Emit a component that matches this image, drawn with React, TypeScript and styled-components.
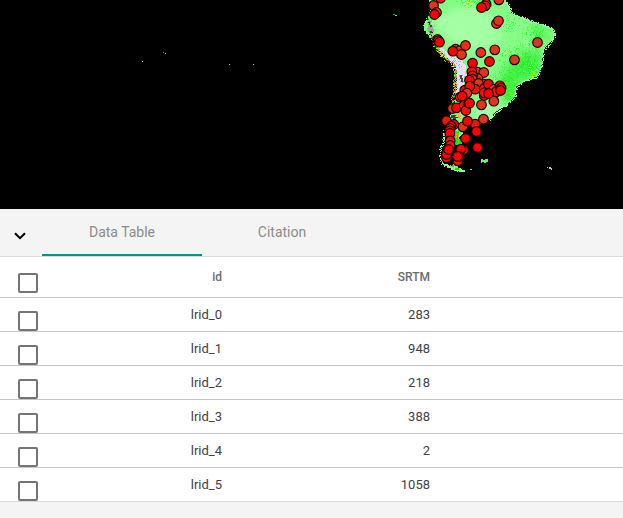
import React from "react";
import styled, { createGlobalStyle } from "styled-components";

const GlobalStyle = createGlobalStyle`
  * { box-sizing: border-box; }
  body { margin: 0; background: #f4f4f4; font-family: Roboto, "Liberation Sans", sans-serif; overflow: hidden; }
`;

const Page = styled.main`
  display: flex;
  flex-direction: column;
  width: 623px;
  height: 518px;
  overflow: hidden;
  background: #f4f4f4;
`;

const MapView = styled.svg`
  display: block;
  flex: none;
  width: 623px;
  height: 209px;
  background: #000;
`;

const TabBar = styled.nav`
  display: flex;
  flex: none;
  height: 48px;
  border-bottom: 1px solid #dcdcdc;
`;

const CollapseButton = styled.button`
  display: flex;
  align-items: center;
  justify-content: center;
  width: 42px;
  height: 47px;
  padding: 7px 2px 0 0;
  border: 0;
  background: none;
`;

const Tab = styled.button<{ $active?: boolean }>`
  width: 160px;
  height: 47px;
  padding: 2px 0 0;
  border: 0;
  border-bottom: 2px solid ${(p) => (p.$active ? "#009688" : "transparent")};
  background: none;
  color: #8b8b8b;
  font: 400 14px/43px Roboto, sans-serif;
`;

const Row = styled.div<{ $header?: boolean }>`
  display: grid;
  grid-template-columns: 56px 166px 208px 1fr;
  flex: none;
  height: ${(p) => (p.$header ? 41 : 34)}px;
  border-bottom: 1px solid #c4c4c4;
  background: #fff;
  color: ${(p) => (p.$header ? "#6c6c6c" : "#424242")};
  font-size: ${(p) => (p.$header ? 12 : 13)}px;
  font-weight: ${(p) => (p.$header ? 500 : 400)};
  line-height: ${(p) => (p.$header ? 40 : 33)}px;

  &:last-child { border-bottom-color: #d8d8d8; }
`;

const CheckCell = styled.div<{ $header?: boolean }>`
  padding: ${(p) => (p.$header ? 16 : 13)}px 0 0 18px;
`;

const Checkbox = styled.div`
  width: 20px;
  height: 20px;
  border: 2px solid #757575;
  border-radius: 2px;
`;

const Cell = styled.div`
  text-align: right;
`;

/* Map geometry is expressed in thirds of a pixel, origin at x = 415. */
const LAND =
  "M42 0H270L280 15L290 39L306 48L326 52L352 65L385 74L412 85L420 104L412 120L397 136L385 150L382 180L378 206L366 230L335 240L320 250L303 260L302 285L288 302L270 318L250 330L233 343L234 352L218 363L190 375L166 372L146 390L141 408L126 412L120 430L106 430L104 377L107 340L116 315L121 279L118 244L121 213L112 194L85 173L65 152L55 125L38 103L28 88L27 70L39 57L42 39L49 24Z";
const ANDES =
  "M64 140L83 145L105 165L130 175L144 184L153 198L151 217L159 227L148 240L146 261L132 278L124 286L122 255L118 222L112 194L86 173Z";

const makeRandom = (seed: number) => () => {
  seed = (seed * 1664525 + 1013904223) >>> 0;
  return seed / 4294967296;
};

type Patch = [cx: number, cy: number, rx: number, ry: number, count: number];
const speckle = (seed: number, patches: Patch[]) => {
  const random = makeRandom(seed);
  let d = "";
  for (const [cx, cy, rx, ry, count] of patches) {
    for (let i = 0; i < count; i++) {
      const angle = random() * Math.PI * 2;
      const radius = random();
      const x = Math.round((cx + Math.cos(angle) * radius * rx) / 3) * 3;
      const y = Math.round((cy + Math.sin(angle) * radius * ry) / 3) * 3;
      d += `M${x} ${y}h3v3h-3z`;
    }
  }
  return d;
};

const FOREST = speckle(7, [
  [325, 190, 80, 65, 280], [345, 200, 30, 55, 110], [365, 105, 50, 40, 110], [265, 240, 65, 40, 110],
  [180, 5, 65, 20, 110], [285, 65, 40, 40, 40], [40, 85, 20, 35, 60], [278, 285, 24, 30, 80],
]);
const PALE = speckle(31, [
  [130, 85, 95, 80, 310], [255, 100, 85, 70, 270], [220, 335, 40, 32, 90], [330, 130, 70, 60, 160],
]);
const YELLOW = speckle(13, [[350, 214, 30, 30, 22], [162, 8, 26, 22, 14], [310, 165, 10, 12, 5], [280, 275, 14, 22, 6]]);
const GREY = speckle(19, [[120, 180, 30, 25, 22], [138, 239, 10, 25, 20]]);

/* Follows a polyline, leaving irregular coastal pixels along it. */
const coast = (seed: number, points: number[][], spread: number) => {
  const random = makeRandom(seed);
  let d = "";
  for (let i = 1; i < points.length; i++) {
    const [x0, y0] = points[i - 1];
    const [x1, y1] = points[i];
    const steps = Math.ceil(Math.hypot(x1 - x0, y1 - y0) / 3);
    for (let s = 0; s < steps; s++) {
      const t = s / steps;
      const x = Math.round((x0 + (x1 - x0) * t + (random() - 0.5) * spread) / 3) * 3;
      const y = Math.round((y0 + (y1 - y0) * t + (random() - 0.5) * spread) / 3) * 3;
      d += `M${x} ${y}h3v3h-3z`;
    }
  }
  return d;
};
const WEST = [[42, 60], [43, 92], [62, 138], [86, 171], [113, 193], [121, 215], [120, 255], [114, 302], [107, 338]];
const SOUTH = [[92, 385], [85, 405], [84, 430], [76, 440], [75, 475], [84, 492], [103, 498], [122, 508], [146, 509]];
const EAST = [[270, 0], [280, 15], [290, 39], [306, 48], [326, 52], [352, 65], [385, 74], [412, 85], [420, 104], [412, 120], [385, 150], [382, 180], [378, 206], [366, 230], [335, 240], [303, 260], [302, 285], [270, 318], [233, 343], [218, 363]];
const NORTHWEST = [[49, 24], [40, 50], [27, 70], [28, 88], [38, 103]];

type Marker = [x: number, y: number, fill: string];
const R = "#ff0000";
const O = "#e73219";
const D = "#d9381b";
const M = "#f21308";
const MARKERS: Marker[] = [
  [76, -6, M], [55, 16, D], [64, 37, O], [58, 43, R],
  [251, -1, O], [213, 12, O], [210, 17, M], [199, 22, R],
  [244, 70, O], [250, 62, O], [367, 127, D],
  [67, 118, O], [69, 122, M], [73, 126, R],
  [121, 147, O], [133, 152, O], [151, 136, O], [139, 163, O], [113, 153, R],
  [197, 157, O], [239, 149, O], [298, 179, D], [223, 184, R], [172, 189, R],
  [187, 216, O], [206, 217, O], [188, 235, O], [170, 215, M], [172, 227, M], [172, 237, O], [166, 258, M], [163, 240, R],
  [204, 251, M], [190, 250, O], [180, 267, M], [207, 265, M], [220, 252, R],
  [236, 267, O], [243, 275, M], [254, 257, R], [258, 264, M], [256, 271, R],
  [207, 286, M], [207, 278, M], [236, 303, O], [199, 314, O], [220, 280, R],
  [149, 270, M], [164, 258, M], [155, 279, O], [135, 291, M], [141, 288, R],
  [112, 325, D], [124, 323, R], [147, 315, M], [152, 331, M], [160, 308, M], [163, 309, R],
  [205, 357, D], [180, 372, M], [143, 380, D], [157, 363, R],
  [94, 362, M], [116, 373, R], [108, 378, M], [105, 385, M], [103, 392, R], [104, 400, R],
  [184, 394, R], [151, 415, R], [187, 442, R], [105, 422, M], [105, 436, M],
  [94, 473, M], [94, 463, R], [100, 448, R],
  [145, 449, M], [137, 447, R], [128, 482, M], [132, 469, M], [127, 469, R],
];

const Terrain = () => (
  <MapView viewBox="0 0 623 209" role="img" aria-label="Occurrence map">
    <defs>
      <clipPath id="land"><path d={LAND} /></clipPath>
      <filter id="soft" x="-20%" y="-20%" width="140%" height="140%"><feGaussianBlur stdDeviation="14" /></filter>
    </defs>
    <g transform="translate(415 0) scale(.333333)" shapeRendering="crispEdges">
      <path d={LAND} fill="#84fb84" />
      <g clipPath="url(#land)">
        <g filter="url(#soft)">
          <path d="M40 60L160 15L245 50L255 145L170 150L100 120Z" fill="#a4ffa4" />
          <path d="M175 330L210 290L255 315L220 370L170 365Z" fill="#a4ffa4" />
          <path d="M310 155L360 145L385 165L370 235L300 250L250 230Z" fill="#48f048" />
          <path d="M350 70L390 80L400 120L355 125Z" fill="#50f550" />
          <path d="M260 240L305 240L295 300L270 300Z" fill="#2cf52c" />
        </g>
        <path d={PALE} fill="#b0ffb0" opacity=".3" />
        <path d={FOREST} fill="#0ee80e" opacity=".5" />
        <path d={YELLOW} fill="#d0ed00" />
        <path d={ANDES} fill="#e6e1f2" />
        <path d={GREY} fill="#aaa3b4" />
        <path d="M135 225h6v9h3v12h-6v-9h-3z" fill="#4b4650" />
        <path d="M120 210V270L109 326" fill="none" stroke="#5fd000" strokeWidth="5" />
      </g>
      <path d={coast(71, EAST, 6)} fill="#8dff8d" />
      <path d={coast(83, EAST, 9).split("M").filter((_, i) => i % 3 === 0).map((s) => (s ? "M" + s : "")).join("")} fill="#8dff8d" />
      <path d={coast(77, NORTHWEST, 8)} fill="#7dfa7d" />
      <path d={coast(5, WEST, 12)} fill="#e8cc62" />
      <path d={coast(8, WEST, 9)} fill="#161516" />
      <path d={coast(9, WEST, 12)} fill="#38e431" />
      <path d={coast(22, WEST, 7)} fill="#d7531c" opacity=".7" />
      <path d="M42 66h6v9h3v6h3v6h3v9h-6v6h-6v-9h-3v-6h-3v-9h3z" fill="#a69fa8" />
      <path d="M42 66h3v9h6v6h-6zM45 93h6v6h-6zM108 345h15v6h12v3h-12v6h-9v-6h-6z" fill="#413b43" />
      <path d="M119 393H132V417H140V435H121V420H115V405H119Z" fill="#24e713" />
      <path d={speckle(23, [[128, 404, 13, 14, 13], [128, 346, 13, 12, 12]])} fill="#e8a62c" />
      <path d={coast(41, SOUTH, 10)} fill="#79ff79" />
      <path d={coast(57, SOUTH, 6)} fill="#91ff91" />
      <path d="M81 489h6v3h12v6h15v-6h6v6h9v6h9v6h12v6h-18v-3h-15v-3h-9v-6h-12v-6h-9z" fill="#86fc86" />
      <path d="M120 504h12v6h-12zM111 495h6v6h-6z" fill="#16d916" />
      <path d="M132 507h6v3h-6z" fill="#efe600" />
      <path d="M198 477h6v3h6v-3h9v9h-6v3h-6v-3h-6v3h-3zM165 507h6v3h-6zM396 501h3v3h-3zM402 501h6v3h3v6h-3v-3h-6z" fill="#72ef72" />
    </g>
    <path d="M142 61h1v1h-1zM165 53h1v1h-1zM229 64h1v1h-1zM253 64h1v1h-1zM395 15h2v1h-2z" fill="#80f080" shapeRendering="crispEdges" />
    <path d="M163 52h1v1h-1zM393 14h2v1h-2z" fill="#00d52b" shapeRendering="crispEdges" />
    <g transform="translate(415 0) scale(.333333)">
      {MARKERS.map(([x, y, fill], i) => (
        <circle key={i} cx={x + 0.5} cy={y + 0.5} r="14.5" fill={fill} stroke="#100" strokeWidth="3.3" />
      ))}
    </g>
  </MapView>
);

const DATA = [
  ["lrid_0", "283"], ["lrid_1", "948"], ["lrid_2", "218"],
  ["lrid_3", "388"], ["lrid_4", "2"], ["lrid_5", "1058"],
];

export default function App() {
  return (
    <Page>
      <GlobalStyle />
      <Terrain />
      <TabBar>
        <CollapseButton aria-label="Collapse panel">
          <svg width="12" height="8" viewBox="0 0 12 8">
            <path d="M1 1.2L6 6.2L11 1.2" fill="none" stroke="#000" strokeWidth="2" />
          </svg>
        </CollapseButton>
        <Tab $active>Data Table</Tab>
        <Tab>Citation</Tab>
      </TabBar>
      <section>
        <Row $header>
          <CheckCell $header><Checkbox /></CheckCell>
          <Cell>id</Cell>
          <Cell>SRTM</Cell>
        </Row>
        {DATA.map(([id, value]) => (
          <Row key={id}>
            <CheckCell><Checkbox /></CheckCell>
            <Cell>{id}</Cell>
            <Cell>{value}</Cell>
          </Row>
        ))}
      </section>
    </Page>
  );
}
